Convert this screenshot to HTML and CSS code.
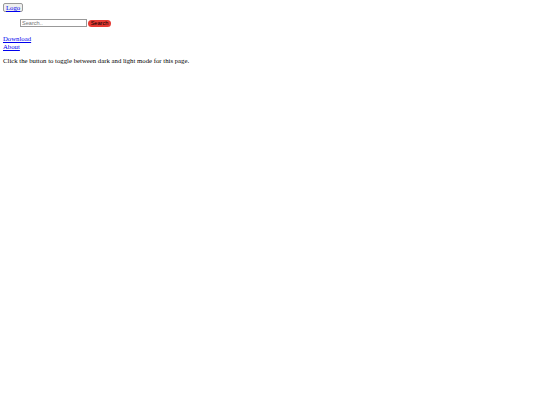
FILE: index.html
```html
<!DOCTYPE html>
<html lang="en">
<head>
    <meta charset="UTF-8">
    <meta name="viewport" content="width=device-width, initial-scale=1.0">
    <title>Dark Mode</title>
    <link rel="stylesheet" href="styles.css">
</head>
<body>
    <header class="top-bar">
        <button class="logo-btn"><a href="#">Logo</a></button>
        <form class="search-form">
            <input type="text" class="search-input" placeholder="Search..">
            <button type="submit" class="search-btn">Search</button>
        </form>
    </header>

    <nav class="links">
        <a href="#">Download</a>
        <a href="#">About</a>
    </nav>

    <p class="note">Click the button to toggle between dark and light mode for this page.</p>
</body>
</html>
```

FILE: styles.css
```css
body {
    margin: 3px;
    font-family: "Liberation Serif", serif;
    font-size: 6.75px;
    background-color: #fff;
    color: #000;
    -webkit-font-smoothing: antialiased;
}

.top-bar {
    display: flex;
    flex-direction: column;
    align-items: flex-start;
}

.logo-btn {
    font-family: "Liberation Serif", serif;
    font-size: 6.75px;
    padding: 0 2px;
    height: 9px;
    line-height: 7px;
    background-color: #efefef;
    border: 1px solid #9a9a9a;
    border-radius: 2px;
}

.logo-btn a {
    color: #0000ee;
}

.search-form {
    display: flex;
    align-items: center;
    gap: 1px;
    margin: 7px 0 0 17px;
}

.search-input {
    width: 67px;
    height: 8px;
    box-sizing: border-box;
    padding: 0 1px;
    font-family: "Liberation Sans", sans-serif;
    font-size: 5.6px;
    border: 1px solid #999;
}

.search-btn {
    width: 23px;
    height: 7px;
    padding: 0;
    font-family: "Liberation Sans", sans-serif;
    font-size: 5.6px;
    line-height: 6px;
    color: #000;
    background-color: #e53a33;
    border: none;
    border-radius: 4px;
}

.links {
    display: flex;
    flex-direction: column;
    margin-top: 8px;
    line-height: 7.7px;
}

.links a {
    color: #0000ee;
}

.note {
    margin: 7px 0;
    line-height: 7.7px;
}
```
